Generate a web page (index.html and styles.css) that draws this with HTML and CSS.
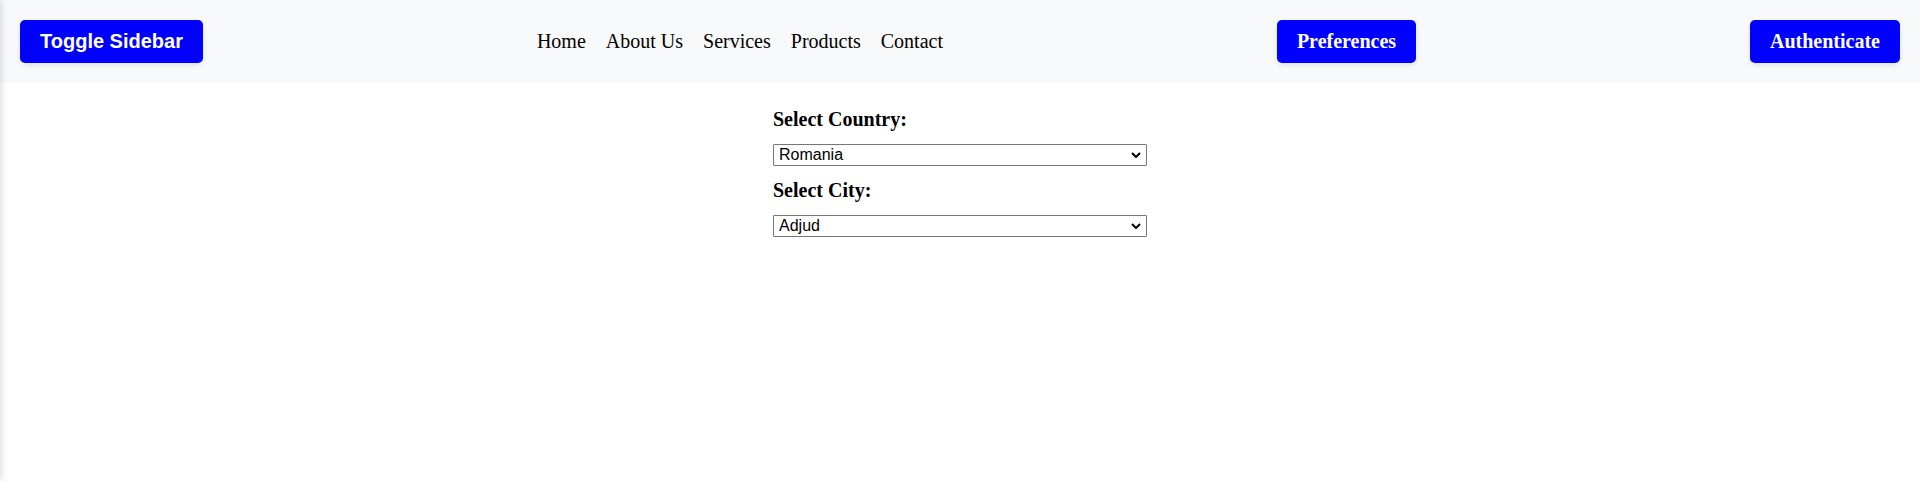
FILE: index.html
```html
<!DOCTYPE html>
<html lang="en">
<head>
<meta charset="utf-8">
<title>Location</title>
<link rel="stylesheet" href="styles.css">
</head>
<body>
<aside class="sidebar"></aside>
<header class="topbar">
  <button class="btn btn-sans">Toggle Sidebar</button>
  <nav class="nav">
    <a href="#">Home</a>
    <a href="#">About Us</a>
    <a href="#">Services</a>
    <a href="#">Products</a>
    <a href="#">Contact</a>
  </nav>
  <button class="btn">Preferences</button>
  <button class="btn">Authenticate</button>
</header>
<main class="form">
  <label class="field-label" for="country">Select Country:</label>
  <select id="country" class="field-select">
    <option>Romania</option>
  </select>
  <label class="field-label" for="city">Select City:</label>
  <select id="city" class="field-select">
    <option>Adjud</option>
  </select>
</main>
</body>
</html>
```

FILE: styles.css
```css
html, body {
  margin: 0;
  padding: 0;
  background: #ffffff;
  font-family: "Liberation Serif", "Times New Roman", serif;
  font-size: 20px;
  color: #000;
}

.sidebar {
  position: fixed;
  top: 0;
  left: -250px;
  width: 250px;
  height: 100%;
  background: #ffffff;
  box-shadow: 2px 0 6px rgba(0, 0, 0, 0.12);
}

.topbar {
  display: flex;
  align-items: center;
  justify-content: space-between;
  padding: 20px;
  background: #f8f9fa;
}

.btn {
  font-family: "Liberation Serif", "Times New Roman", serif;
  font-size: 20px;
  font-weight: bold;
  line-height: 23px;
  color: #ffffff;
  background: #0000ff;
  border: none;
  border-radius: 5px;
  padding: 10px 20px;
  box-shadow: 0 2px 5px rgba(0, 0, 0, 0.1);
  cursor: pointer;
}

.btn-sans {
  font-family: "Liberation Sans", Arial, sans-serif;
}

.nav {
  display: flex;
  gap: 20px;
}

.nav a {
  color: #000;
  text-decoration: none;
  font-size: 20px;
  line-height: 23px;
}

.form {
  width: 374px;
  margin: 12px auto 0;
  display: flex;
  flex-direction: column;
}

.field-label {
  display: block;
  font-weight: bold;
  font-size: 20px;
  line-height: 23px;
  margin: 13px 0;
}

.field-select {
  display: block;
  width: 374px;
  height: 22px;
  padding: 0 20px 0 5px;
  font-family: "Liberation Sans", Arial, sans-serif;
  font-size: 16px;
  line-height: 20px;
  color: #000;
  border: 1px solid #767676;
  border-radius: 1px;
  -webkit-appearance: none;
  appearance: none;
  background: #fff url("data:image/svg+xml;utf8,<svg xmlns='http://www.w3.org/2000/svg' width='10' height='6' viewBox='0 0 10 6'><path d='M1 1 L5 5 L9 1' fill='none' stroke='black' stroke-width='2'/></svg>") no-repeat right 5px center;
  background-size: 10px 6px;
}
```
